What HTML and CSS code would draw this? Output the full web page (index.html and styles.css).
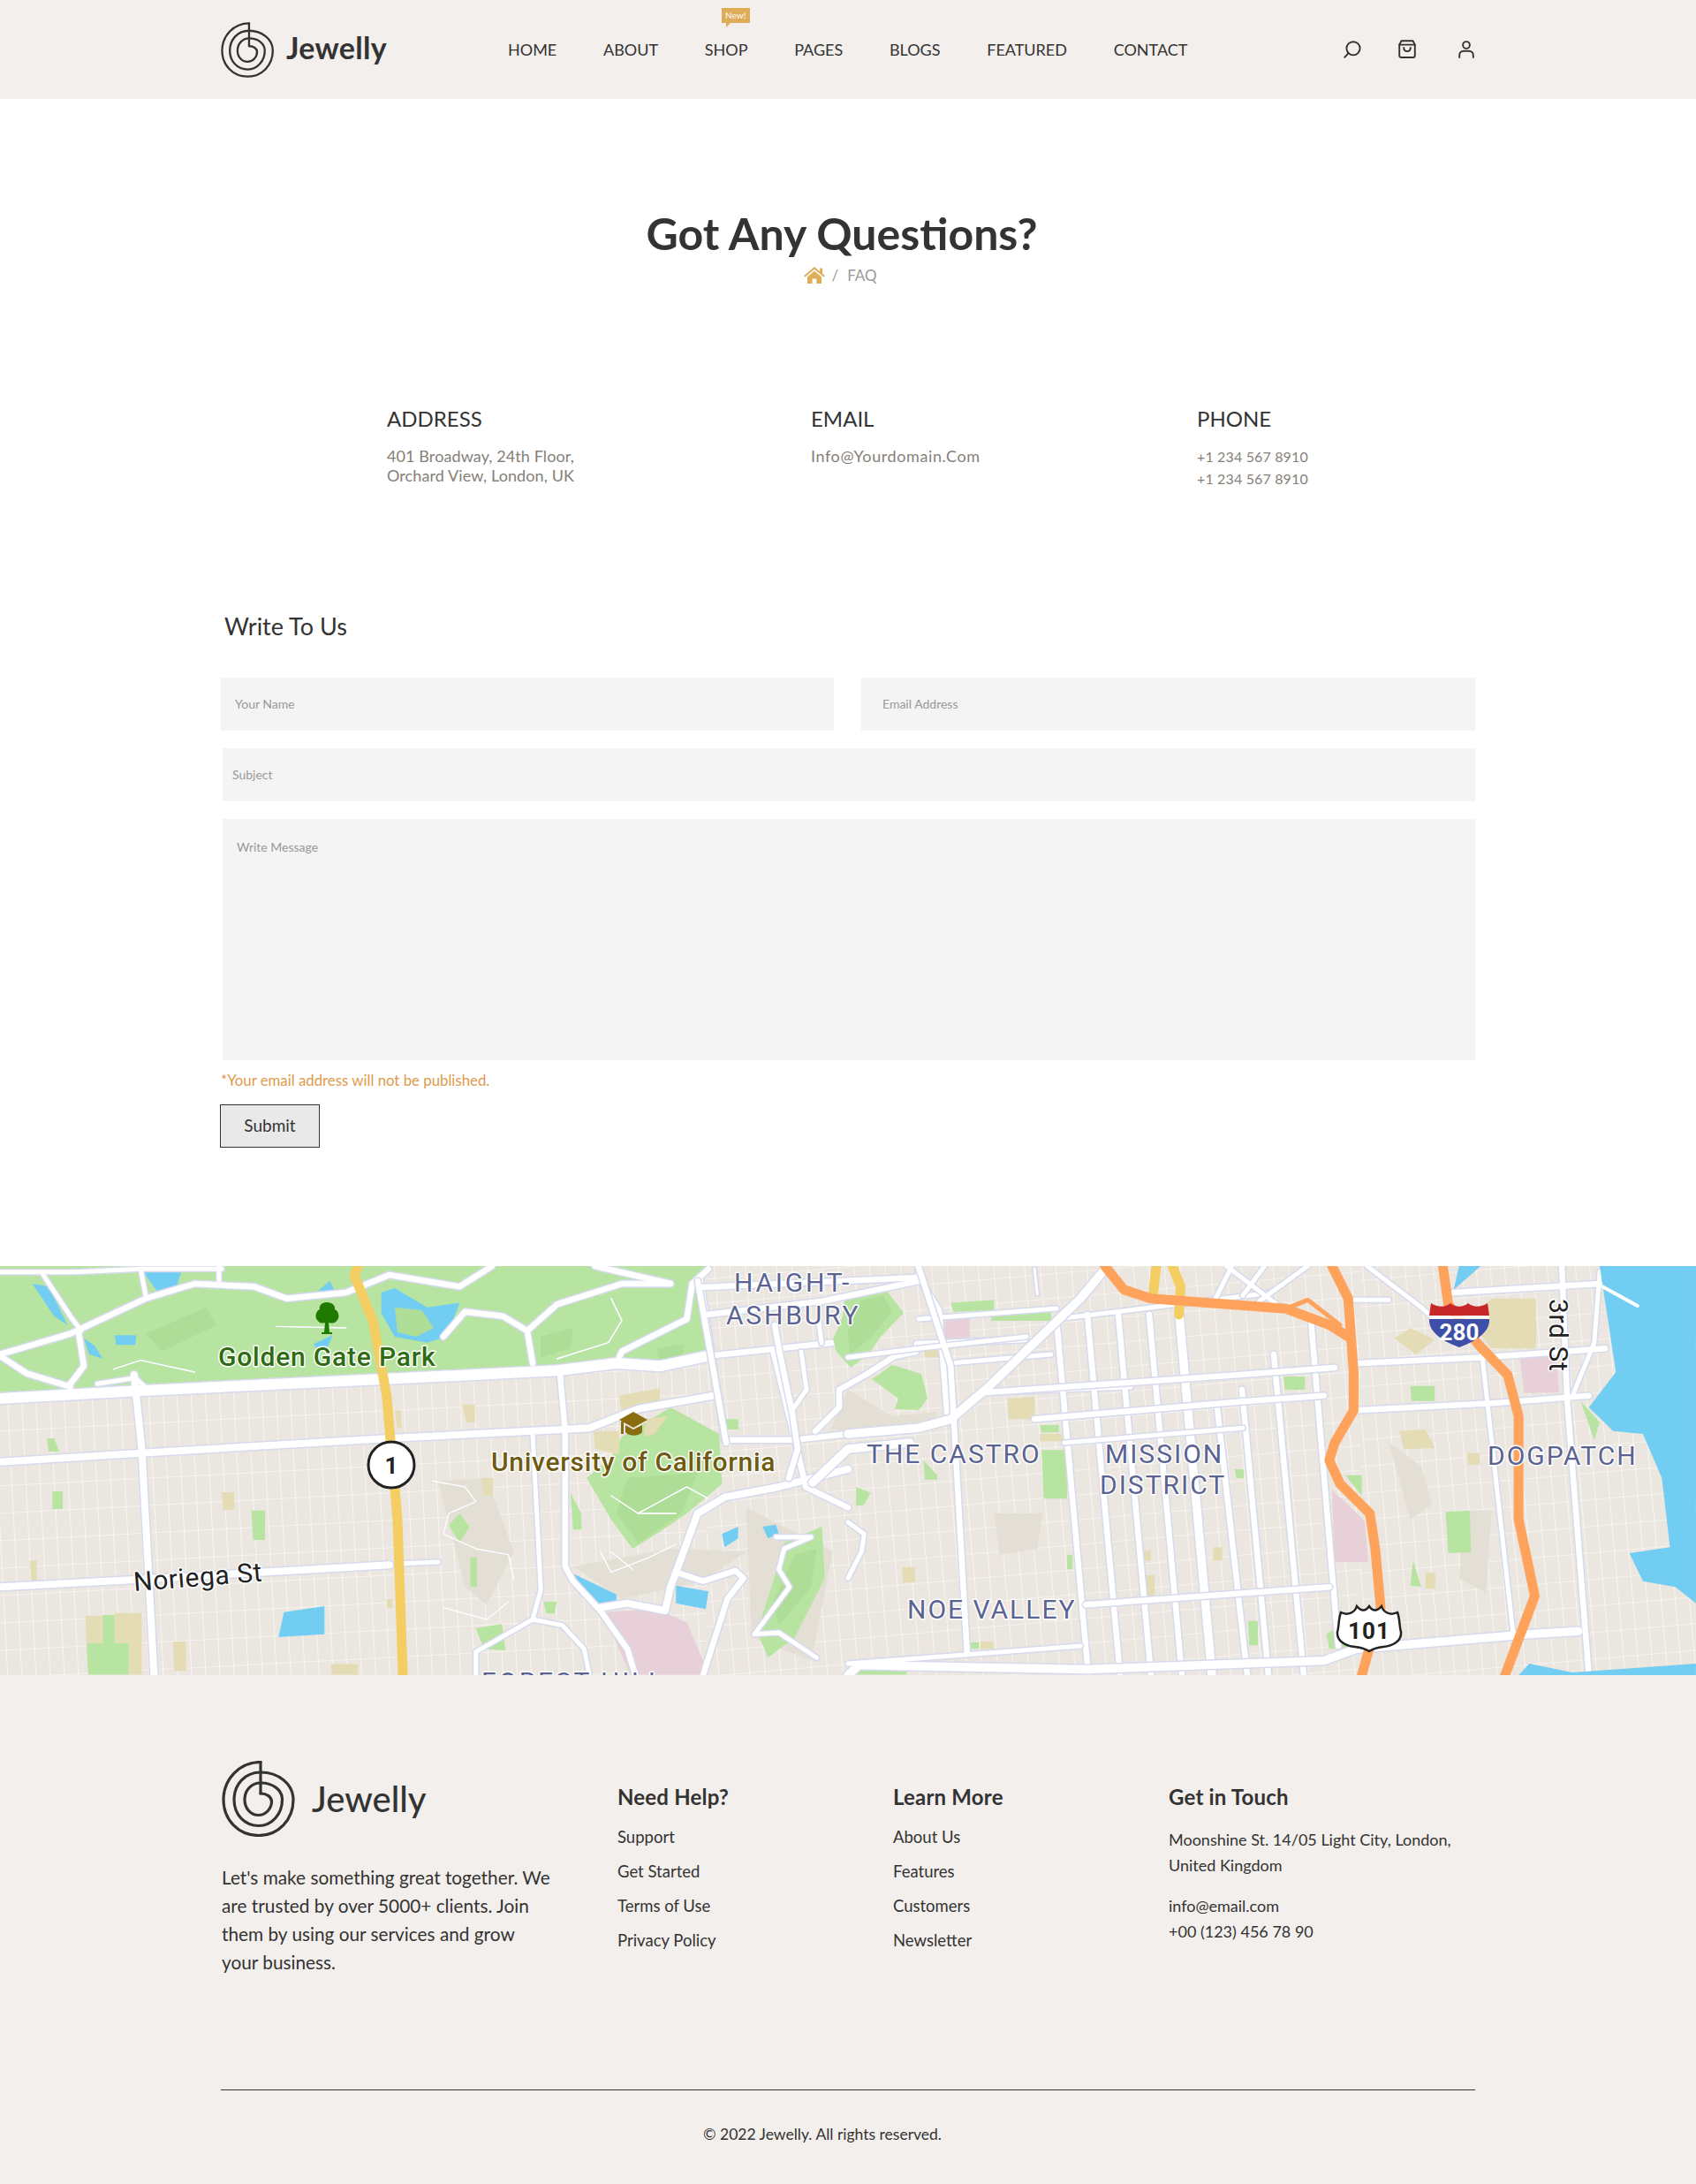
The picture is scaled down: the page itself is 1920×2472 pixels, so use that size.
FILE: index.html
```html
<!DOCTYPE html>
<html lang="en">
<head>
<meta charset="utf-8">
<title>Jewelly - Contact</title>
<link rel="stylesheet" href="styles.css">
</head>
<body>
<svg class="defs" width="0" height="0" aria-hidden="true">
  <defs>
    <g id="logo-mark">
      <path d="M44 1.5C20 1.5 2 21 2 44C2 67 19 84.5 42 84.5C64 84.5 81 67 81 44C81 26 64 13 44 13C26 13 14 27 14 44C14 61 26 73.5 42 73.5C57 73.5 68.5 60 68.5 44C68.5 33 58 25 44 25C34 25 26 33 26 44C26 54 33 61.5 41.5 61.5C50 61.5 56.5 54 56.5 46C56.5 41 51 37 44 37"/>
      <path d="M44 1.5V37"/>
    </g>
  </defs>
</svg>

<header class="site-header">
  <a class="brand" href="#">
    <svg class="brand-mark" viewBox="0 0 84 86"><use href="#logo-mark"/></svg>
    <span class="brand-name">Jewelly</span>
  </a>
  <nav class="main-nav">
    <a href="#">HOME</a>
    <a href="#">ABOUT</a>
    <a href="#" class="has-badge">SHOP<span class="badge">New!</span></a>
    <a href="#">PAGES</a>
    <a href="#">BLOGS</a>
    <a href="#">FEATURED</a>
    <a href="#">CONTACT</a>
  </nav>
  <div class="header-icons">
    <svg class="icon icon-search" viewBox="0 0 20 20"><circle cx="11" cy="8.8" r="7.6"/><path d="M5.6 14.2L1.2 18.8"/></svg>
    <svg class="icon icon-bag" viewBox="0 0 20 21"><path d="M3.5 1.2H16.5L18.8 5.6V18A2 2 0 0 1 16.8 20H3.2A2 2 0 0 1 1.2 18V5.6Z"/><path d="M1.2 5.6H18.8"/><path d="M6.2 9C6.2 14.4 13.8 14.4 13.8 9"/></svg>
    <svg class="icon icon-user" viewBox="0 0 18 20"><circle cx="9" cy="5" r="3.9"/><path d="M1.2 19V16.5C1.2 13.6 3.4 11.8 6 11.8H12C14.6 11.8 16.8 13.6 16.8 16.5V19"/></svg>
  </div>
</header>

<main>
  <section class="page-title">
    <h1>Got Any Questions?</h1>
    <div class="crumbs">
      <svg class="crumb-home" viewBox="0 0 24 19"><path d="M12 0L18.2 5.2V1.6H21V7.6L24 10.2L22.6 11.6L12 2.8L1.4 11.6L0 10.2Z"/><path d="M4 11.4L12 4.8L20 11.4V19H14.4V13.4H9.6V19H4Z"/></svg>
      <span class="crumb-sep">/</span>
      <span class="crumb-page">FAQ</span>
    </div>
  </section>

  <section class="contact-info">
    <div class="info-col">
      <h2>ADDRESS</h2>
      <p class="tight">401 Broadway, 24th Floor,<br>Orchard View, London, UK</p>
    </div>
    <div class="info-col">
      <h2>EMAIL</h2>
      <p class="spaced">Info@Yourdomain.Com</p>
    </div>
    <div class="info-col">
      <h2>PHONE</h2>
      <p class="numbers">+1 234 567 8910<br>+1 234 567 8910</p>
    </div>
  </section>

  <section class="write-us">
    <h2>Write To Us</h2>
    <form class="contact-form">
      <div class="row-two">
        <input class="field field-name" type="text" placeholder="Your Name">
        <input class="field field-email" type="text" placeholder="Email Address">
      </div>
      <input class="field field-subject" type="text" placeholder="Subject">
      <textarea class="field field-message" placeholder="Write Message"></textarea>
      <p class="form-note">*Your email address will not be published.</p>
      <button class="submit" type="button">Submit</button>
    </form>
  </section>

  <section class="map">
    <svg class="map-svg" viewBox="0 0 1920 463" preserveAspectRatio="none">
      <defs>
        <pattern id="grid-a" width="16" height="31" patternUnits="userSpaceOnUse" patternTransform="rotate(-3)">
          <path class="grid-line" d="M0 0V31M0 0H16"/>
        </pattern>
        <pattern id="grid-b" width="17.5" height="28" patternUnits="userSpaceOnUse" patternTransform="rotate(-5)">
          <path class="grid-line" d="M0 0V28M0 0H17.5"/>
        </pattern>
        <pattern id="grid-c" width="16" height="30" patternUnits="userSpaceOnUse" patternTransform="rotate(-5)">
          <path class="grid-line" d="M0 0V30M0 0H16"/>
        </pattern>
        <g id="roads-west">
          <path class="r11" d="M0 490L240 465L700 425L1030 395L1140 370L1220 380L1310 345"/>
          <path class="r5" d="M1310 345L1568 295"/>
          <path class="r6" d="M0 705L260 675L720 625L1040 595L1090 590L1180 525L1320 480"/>
          <path class="r6" d="M0 1130L250 1105L720 1055"/>
          <path class="r4" d="M740 1050L810 1045"/>
          <path class="r6" d="M248 410L262 660L285 1430"/>
          <path class="r5" d="M1035 395L1045 600L1045 1060L1060 1110L1110 1210L1160 1340L1175 1430"/>
          <path class="r4" d="M985 610L1000 1140L985 1240L880 1350L880 1430"/>
          <path class="r4" d="M985 1240L1040 1260L1080 1340L1090 1430"/>
          <path class="r5" d="M1295 90L1340 630L1470 630L1568 610"/>
          <path class="r5" d="M1430 330L1470 630L1490 790L1568 860"/>
          <path class="r6" d="M1568 730L1440 790L1340 825L1290 880L1240 1130L1230 1210L1160 1185L1110 1200"/>
          <path class="r5" d="M1250 1080L1300 1110L1360 1075L1375 1100L1345 1170L1300 1430"/>
          <path class="r4" d="M1435 960L1500 960L1450 1000L1440 1070L1460 1130L1395 1290L1440 1285L1510 1370"/>
          <path class="r5" d="M0 340L130 270L270 150L360 100L470 110L530 150L640 130L720 70L850 110L910 40"/>
          <path class="r5" d="M0 345L50 405L130 450"/>
          <path class="r5" d="M145 260L155 380L130 440"/>
          <path class="r4" d="M80 70L130 210L150 260"/>
          <path class="r4" d="M260 50L270 145"/>
          <path class="r5" d="M1145 350L1150 330L1270 220L1280 100L1310 50"/>
          <path class="r5" d="M985 370L975 260L1030 170L1150 100L1240 100"/>
          <path class="r5" d="M820 280L860 195L930 210L975 260"/>
          <path class="r5" d="M1100 40L1240 100"/>
          <path class="r4" d="M0 60L140 60L260 50L410 50"/>
          <path class="r4" d="M405 40L405 90"/>
          <path class="r4" d="M180 440L250 420L280 470"/>
          <path class="r2" d="M510 245L640 250"/>
          <path class="r2" d="M210 390L260 360L360 400"/>
          <path class="r2" d="M1130 150L1150 225L1125 300L1030 355"/>
          <path class="r2" d="M800 770L860 790L880 840L830 880L820 950L880 1000L940 1020L950 1100"/>
          <path class="r2" d="M1130 820L1180 880L1270 790L1310 830"/>
          <path class="r2" d="M1110 1010L1130 1080L1200 1030L1250 985"/>
          <path class="r2" d="M1130 1010L1170 1070"/>
          <path class="r2" d="M1180 880H1250"/>
          <path class="r2" d="M820 1200L900 1240L940 1180"/>
        </g>
        <g id="roads-mid">
          <path class="r5" d="M790 17L822 200"/>
          <path class="r5" d="M795 24L1040 13"/>
          <path class="r5" d="M800 55L930 40L1040 17"/>
          <path class="r5" d="M1040 0V13L1063 50L1073 177"/>
          <path class="r7" d="M920 245L960 207L1030 200"/>
          <path class="r5" d="M877 67L883 100L897 167L903 207L893 240"/>
          <path class="r4" d="M907 97L913 140L897 163"/>
          <path class="r4" d="M927 63L930 87"/>
          <path class="r5" d="M923 187L950 160L950 140L980 123L1013 102L1037 97L1038 88L1070 87L1160 83"/>
          <path class="r4" d="M1117 143L1280 137"/>
          <path class="r4" d="M1172 173L1280 163"/>
          <path class="r4" d="M1040 60L1196 48"/>
          <path class="r4" d="M1075 110L1190 100"/>
          <path class="r4" d="M1196 60L1440 30"/>
          <path class="r5" d="M1196 60L1232 463"/>
          <path class="r5" d="M1231 55L1268 463"/>
          <path class="r5" d="M1266 55L1303 463"/>
          <path class="r5" d="M1301 55L1338 463"/>
          <path class="r7" d="M1335 55L1372 463"/>
          <path class="r5" d="M1378 160L1412 463"/>
          <path class="r5" d="M1406 140L1436 463"/>
          <path class="r5" d="M1442 100L1476 463"/>
          <path class="r5" d="M1484 60L1515 430"/>
        </g>
        <g id="roads-east">
          <path class="r7" d="M0 610L130 590L190 560L260 450L430 150L480 40"/>
          <path class="r5" d="M250 470L720 410L900 385"/>
          <path class="r5" d="M945 370L1180 350L1400 320"/>
          <path class="r5" d="M345 560L730 500L880 480"/>
          <path class="r5" d="M940 530L1200 505L1370 480"/>
          <path class="r4" d="M400 640L730 590"/>
          <path class="r4" d="M0 1390L430 1330"/>
          <path class="r5" d="M440 1190L890 1130"/>
          <path class="r7" d="M0 1430L20 1395L440 1410L880 1380L940 1340L1260 1290L1350 1280"/>
          <path class="r5" d="M1320 40L1330 500L1370 1430"/>
          <path class="r4" d="M1390 60L1380 300L1340 480"/>
          <path class="r4" d="M1170 300L1230 1290"/>
          <path class="r5" d="M130 40L190 380L220 1350"/>
          <path class="r4" d="M0 350L130 320L330 280"/>
          <path class="r4" d="M680 150L710 40"/>
          <path class="r4" d="M700 40L800 180"/>
          <path class="r4" d="M770 40L730 140"/>
          <path class="r4" d="M850 40L760 160"/>
          <path class="r4" d="M960 40L1060 180L1130 300"/>
          <path class="r5" d="M1120 130L1390 100"/>
          <path class="r4" d="M0 910L30 950L25 1010L0 1100"/>
          <path class="r3" d="M345 50L350 135"/>
          <path class="r4" d="M930 155L1000 155"/>
        </g>
      </defs>

      <rect class="land" width="1920" height="463"/>
      <rect x="0" y="95" width="800" height="368" fill="url(#grid-a)"/>
      <rect x="800" y="0" width="740" height="463" fill="url(#grid-b)"/>
      <rect x="1540" y="0" width="380" height="463" fill="url(#grid-c)"/>

      <g transform="scale(0.6122 0.3333) translate(0 -40)">
        <path class="terrain" d="M810 770L900 760L950 1010L900 1190L860 1130Z"/>
        <path class="terrain" d="M1060 1060L1240 1000L1380 1010L1300 1110L1150 1170Z"/>
        <path class="terrain" d="M1380 860L1540 1010L1500 1380L1390 1300Z"/>
        <path class="park" d="M0 40H1310L1290 100L1315 345L1220 380L1140 370L1030 395L700 425L240 465L0 490Z"/>
        <path class="park-deep" d="M270 270L380 180L400 240L300 330Z"/>
        <path class="park-deep" d="M1000 280L1060 250L1055 320L1000 350Z"/>
        <path class="park-deep" d="M1215 320L1265 305L1260 360L1220 365Z"/>
        <path class="park" d="M1240 520L1330 610L1335 780L1270 880L1230 930L1170 1000L1130 900L1085 760L1130 690L1150 620Z"/>
        <path class="park-deep" d="M1160 760L1290 740L1260 880L1180 980L1140 880Z"/>
        <path class="park" d="M1450 980L1520 925L1525 1100L1470 1300L1420 1370L1400 1280L1430 1110Z"/>
        <path class="park-deep" d="M1470 1020L1510 1000L1500 1130L1440 1260L1430 1180Z"/>
        <path class="park" d="M830 920L850 880L868 925L850 980ZM880 1270L928 1255L935 1345L895 1340ZM465 870H490V970H468ZM87 625H100L110 670H90ZM1340 560H1365V595H1342ZM1005 1180H1030L1025 1220H1010ZM870 1030H882V1130H870ZM97 805H116V865H97ZM160 1320H238V1428H163ZM190 1225H212V1320H190ZM1055 810L1075 880V935H1060Z"/>
        <path class="tan" d="M855 510H878V570H862ZM890 760H912V820H895ZM410 808H433V868H413ZM55 1040H68V1110H58ZM320 1315H344V1415H322ZM158 1228H190V1320H160ZM212 1218H262V1428H238V1320H212ZM612 1392H662V1428H614ZM715 1172H726V1202H715ZM1145 480L1220 455L1220 530L1150 540ZM1098 600H1145V680L1100 660ZM1195 560L1235 550L1210 610L1190 620ZM730 530H742V590H735Z"/>
        <path class="pink" d="M1115 1215L1215 1205L1270 1250L1300 1380V1428H1165Z"/>
        <path class="water" d="M265 60H335L325 120L290 125ZM60 100L90 110L125 240L100 210ZM155 285L175 310L190 355L165 340ZM212 275H252L250 308H215ZM585 130L610 90L620 130ZM580 305L615 275L605 320H585ZM705 130L730 115L790 180L850 165L825 280L790 300L730 280L705 200ZM525 1215L600 1195V1290L515 1300ZM1335 950L1365 925V965L1340 995ZM1410 925L1435 918L1440 950L1420 965ZM1250 1125L1310 1145L1305 1205L1250 1185ZM1055 1080L1140 1155V1175L1100 1190Z"/>
        <path class="park-soft" d="M730 180L780 190L802 250L770 280L735 265Z"/>
        <use class="casing" href="#roads-west"/>
        <use class="road" href="#roads-west"/>
        <path class="hwy-y" d="M662 40L655 70L690 230L715 480L722 630L735 900L745 1430"/>
      </g>

      <path class="park" d="M957 33L1003 27L1023 53L997 80L983 100L963 115L947 97L943 83L953 60Z"/>
      <path class="park-deep" d="M975 38L1000 34L1010 52L985 82L962 100L960 75Z"/>
      <path class="park" d="M987 128L1010 112L1043 122L1050 150L1040 163L1013 162L1017 150Z"/>
      <path class="terrain" d="M960 140L1010 170L1060 165V178L1010 190L940 185Z"/>
      <path class="park" d="M1190 62V52L1125 52V45L1125 38L1122 62Z"/>

      <g transform="translate(960 0) scale(0.6122 0.3333) translate(0 -40)">
        <path class="terrain" d="M270 880H360L350 1000L280 1020Z"/>
        <path class="terrain" d="M1000 640L1060 720L1080 850L1040 900Z"/>
        <path class="terrain" d="M1140 870L1190 870L1180 1150L1130 1100Z"/>
        <path class="park" d="M190 165L270 155V190L195 195ZM805 415H845V460H808ZM1040 447H1085V498H1042ZM1250 445H1280L1275 470H1250ZM355 580H390V605H358ZM358 665H405V830H362ZM140 700L165 750V765H142ZM15 790L42 810L30 850L15 855ZM1105 875L1150 870L1152 1012L1110 1015ZM1045 1040L1060 1130L1040 1125ZM740 1245H758V1328H742ZM225 1318H242V1340H225ZM405 1020H415V1070H405ZM715 730H732V760H718ZM920 750H950L950 820ZM1355 500L1390 570L1380 630ZM885 1290L915 1250L925 1340H890ZM1232 230H1272V285H1234ZM20 1400L108 1390V1428H10Z"/>
        <path class="tan" d="M295 490L345 485V560H297ZM140 325H168V350H142ZM1190 150H1272V320H1190L1150 230ZM1010 285L1040 250L1085 290L1050 340ZM1020 600L1068 595L1085 658L1028 662ZM1145 675H1168V715H1147ZM545 1005H560V1040H545ZM675 995H692V1040H675ZM550 1090H567V1160H552ZM100 1062H124V1115H102ZM245 1315H268V1340H245ZM1068 1082H1086V1135H1068Z"/>
        <path class="tan" d="M355 610H398V635H355Z"/>
        <path class="pink" d="M178 210L225 205V290H180ZM1243 355L1310 345L1315 470H1250ZM895 800L935 870L955 905L962 1045H900Z"/>
      </g>

      <use class="casing" href="#roads-mid"/>
      <use class="road" href="#roads-mid"/>

      <g transform="translate(960 0) scale(0.6122 0.3333) translate(0 -40)">
        <use class="casing" href="#roads-east"/>
        <use class="road" href="#roads-east"/>
        <path class="water" d="M1390 40H1568V1185L1530 1130L1470 1110L1445 1015L1520 995L1505 760L1470 610L1415 600L1370 520L1420 400ZM1240 1430L1260 1390L1340 1420L1568 1390V1430ZM1130 40H1170L1120 120Z"/>
        <path class="pier" d="M1395 110L1460 175"/>
        <path class="hwy-y" d="M570 40L565 125"/>
        <path class="hwy-y" d="M600 40L615 110L612 205"/>
        <path class="hwy" d="M475 40L510 120L560 150L810 185L890 240L925 280"/>
        <path class="hwy-thin" d="M810 185L850 155L910 240"/>
        <path class="hwy" d="M895 40L925 150L935 400L935 530L900 640L890 700L910 780L965 880L975 1000L985 1200L950 1430"/>
        <path class="hwy" d="M1100 40L1110 170L1165 305L1220 410L1240 550L1240 900L1270 1160L1215 1430"/>
      </g>

      <path class="tree" d="M370 41C364 41 361 45 362 49C357 51 356 59 360 62C362 65 366 65 368 64L367 75H364V77H376V75H373L372 64C375 65 379 65 381 62C385 59 384 51 379 49C380 45 376 41 370 41Z"/>
      <path class="cap" d="M717 165L733 174L717 183L701 174Z"/>
      <path class="cap" d="M708 180L717 185L727 180V188C723 193 712 193 708 188Z"/>
      <path class="cap" d="M703 176H706V190H703Z"/>

      <text class="lbl lbl-park" x="247" y="113">Golden Gate Park</text>
      <text class="lbl lbl-uni" x="556" y="232">University of California</text>
      <text class="lbl lbl-street" transform="translate(152 368) rotate(-4.5)">Noriega St</text>
      <text class="lbl lbl-street" transform="translate(1754 37) rotate(90)">3rd St</text>
      <text class="lbl lbl-hood lbl-wide" x="831" y="29">HAIGHT-</text>
      <text class="lbl lbl-hood lbl-wide" x="822" y="66">ASHBURY</text>
      <text class="lbl lbl-hood" x="981" y="223">THE CASTRO</text>
      <text class="lbl lbl-hood" x="1251" y="223">MISSION</text>
      <text class="lbl lbl-hood" x="1245" y="258">DISTRICT</text>
      <text class="lbl lbl-hood" x="1027" y="399">NOE VALLEY</text>
      <text class="lbl lbl-hood" x="1684" y="225">DOGPATCH</text>
      <text class="lbl lbl-hood lbl-wide" x="545" y="481">FOREST HILL</text>

      <circle class="shield-1" cx="443" cy="225" r="26"/>
      <text class="shield-num" x="443" y="235">1</text>

      <path class="i280-blue" d="M1618 60H1686C1687 76 1668 86 1652 92C1636 86 1617 76 1618 60Z"/>
      <path class="i280-red" d="M1620 42C1628 47 1636 47 1642 42C1648 47 1656 47 1662 42C1668 47 1676 47 1684 42L1686 56H1618Z"/>
      <path class="i280-line" d="M1618 58H1686"/>
      <text class="shield-280" x="1652" y="84">280</text>

      <path class="us101" d="M1518 392C1526 396 1534 392 1536 385C1541 391 1546 391 1550 385C1554 391 1559 391 1564 385C1566 392 1574 396 1582 392C1585 400 1584 408 1586 414C1587 425 1576 430 1566 431C1558 432 1553 434 1550 436C1547 434 1542 432 1534 431C1524 430 1513 425 1514 414C1516 408 1515 400 1518 392Z"/>
      <text class="shield-101" x="1550" y="422">101</text>
    </svg>
  </section>
</main>

<footer class="site-footer">
  <div class="footer-top">
    <div class="footer-about">
      <a class="foot-brand" href="#">
        <svg class="foot-mark" viewBox="0 0 84 86"><use href="#logo-mark"/></svg>
        <span class="foot-name">Jewelly</span>
      </a>
      <p>Let's make something great together. We are trusted by over 5000+ clients. Join them by using our services and grow your business.</p>
    </div>
    <div class="footer-col">
      <h3>Need Help?</h3>
      <ul>
        <li><a href="#">Support</a></li>
        <li><a href="#">Get Started</a></li>
        <li><a href="#">Terms of Use</a></li>
        <li><a href="#">Privacy Policy</a></li>
      </ul>
    </div>
    <div class="footer-col">
      <h3>Learn More</h3>
      <ul>
        <li><a href="#">About Us</a></li>
        <li><a href="#">Features</a></li>
        <li><a href="#">Customers</a></li>
        <li><a href="#">Newsletter</a></li>
      </ul>
    </div>
    <div class="footer-col footer-touch">
      <h3>Get in Touch</h3>
      <p>Moonshine St. 14/05 Light City, London,<br>United Kingdom</p>
      <p>info@email.com<br>+00 (123) 456 78 90</p>
    </div>
  </div>
  <div class="footer-bottom">© 2022 Jewelly. All rights reserved.</div>
</footer>
</body>
</html>
```

FILE: styles.css
```css
* { box-sizing: border-box; }
html, body { margin: 0; padding: 0; }
body {
  font-family: Lato, "Liberation Sans", sans-serif;
  color: #333;
  background: #fff;
}
a { color: inherit; text-decoration: none; }
h1, h2, h3, p, ul { margin: 0; padding: 0; }
ul { list-style: none; }
.defs { position: absolute; }

#logo-mark { fill: none; stroke: #333; stroke-width: 3.2; stroke-linecap: round; stroke-linejoin: round; }

.site-header {
  height: 112px;
  background: #f3efec;
  padding: 0 250px;
  display: flex;
  align-items: center;
}
.brand { display: flex; align-items: center; width: 325px; }
.brand-mark { width: 61px; height: 63px; margin-top: 1px; }
.brand-name { font-size: 34px; font-weight: 700; margin-left: 13px; margin-top: -6px; letter-spacing: .3px; }

.main-nav { display: flex; gap: 52.7px; font-size: 18px; line-height: 20px; }
.has-badge { position: relative; }
.badge {
  position: absolute;
  left: 19px;
  top: -37px;
  width: 32px;
  height: 17px;
  background: #dfac59;
  color: #fff;
  font-size: 10px;
  line-height: 16px;
  text-align: center;
}
.badge::after {
  content: "";
  position: absolute;
  left: 5px;
  top: 17px;
  border-top: 5px solid #dfac59;
  border-right: 5px solid transparent;
}

.header-icons { margin-left: auto; display: flex; align-items: center; gap: 42px; margin-right: 1px; margin-top: -1px; }
.icon { fill: none; stroke: #333; stroke-width: 1.9; stroke-linecap: round; stroke-linejoin: round; display: block; }
.icon-search { width: 20px; height: 20px; }
.icon-bag { width: 20px; height: 21px; }
.icon-user { width: 18px; height: 20px; margin-left: 6px; }

.page-title { text-align: center; padding-top: 123px; padding-right: 14px; }
.page-title h1 { font-size: 50px; line-height: 58px; font-weight: 700; }
.crumbs { display: flex; justify-content: center; align-items: center; height: 24px; margin: 6px 0 0 -3px; color: #9b9b9b; font-size: 17px; gap: 7px; }
.crumb-home { width: 24px; height: 19px; fill: #dfac59; }
.crumb-sep { margin-right: 3px; }

.contact-info {
  display: grid;
  grid-template-columns: 480px 437px auto;
  padding: 137px 0 0 438px;
}
.info-col h2 { font-size: 24px; line-height: 28px; font-weight: 400; color: #333; margin-bottom: 16px; }
.info-col p { font-size: 18px; line-height: 25px; color: #857f78; }
.info-col p.tight { line-height: 22px; letter-spacing: .1px; padding-top: 1px; }
.info-col p.spaced { letter-spacing: .6px; }
.info-col p.numbers { font-size: 16px; letter-spacing: .15px; }

.write-us { padding: 138px 250px 0; }
.write-us h2 { font-size: 27px; line-height: 34px; font-weight: 400; padding-left: 4px; margin-bottom: 41px; }
.contact-form { display: flex; flex-direction: column; }
.row-two { display: grid; grid-template-columns: 694px 695px; gap: 31px; margin-bottom: 20px; }
.field {
  display: block;
  border: 0;
  outline: 0;
  background: #f4f4f4;
  height: 60px;
  font-family: inherit;
  font-size: 14px;
  color: #333;
  padding-bottom: 2px;
}
.field::placeholder { color: #999; opacity: 1; }
.field-name { padding-left: 16px; }
.field-email { padding-left: 24px; }
.field-subject { margin-left: 2px; width: 1418px; padding-left: 11px; margin-bottom: 20px; }
.field-message { margin-left: 2px; width: 1418px; height: 273px; padding: 23px 16px; resize: none; }
.form-note { color: #e09a4b; font-size: 16.8px; line-height: 20px; margin-top: 13px; }
.submit {
  width: 113px;
  height: 49px;
  margin: 17px 0 0 -1px;
  background: #e9e9e9;
  border: 1px solid #333;
  border-radius: 0;
  font-family: inherit;
  font-size: 19px;
  color: #333;
  padding: 0 0 3px;
}

.map { margin-top: 134px; height: 463px; overflow: hidden; }
.map-svg { display: block; width: 1920px; height: 463px; }
.grid-line { fill: none; stroke: #fff; stroke-width: 1.2; }
.land { fill: #ebe6df; }
.terrain { fill: #e4dfd4; }
.park { fill: #b7e4a0; }
.park-deep, .park-soft { fill: #aedd98; }
.tan { fill: #e4dcb4; }
.pink { fill: #e7d0d8; }
.water { fill: #72cdf2; }
.casing, .road, .hwy, .hwy-y, .hwy-thin, .pier { fill: none; stroke-linecap: round; stroke-linejoin: round; }
.map-svg path { vector-effect: non-scaling-stroke; }
.r2 { stroke-width: 1.4px; }
.r3 { stroke-width: calc(3px + var(--extra, 0px)); }
.r4 { stroke-width: calc(5px + var(--extra, 0px)); }
.r5 { stroke-width: calc(6.5px + var(--extra, 0px)); }
.r6 { stroke-width: calc(8px + var(--extra, 0px)); }
.r7 { stroke-width: calc(9.5px + var(--extra, 0px)); }
.r11 { stroke-width: calc(12px + var(--extra, 0px)); }
.road { stroke: #fff; }
.casing { stroke: #d6daec; --extra: 3px; }
.pier { stroke: #fff; stroke-width: 4; }
.hwy { stroke: #ffa35c; stroke-width: 11; }
.hwy-thin { stroke: #ffa35c; stroke-width: 5; }
.hwy-y { stroke: #f4ce62; stroke-width: 11; }
.tree { fill: #1f7a00; }
.cap { fill: #8a6d10; }
.lbl {
  font-family: Roboto, "Liberation Sans", sans-serif;
  font-size: 30px;
  paint-order: stroke;
  stroke: #fff;
  stroke-width: 3px;
  stroke-linejoin: round;
}
.lbl-park { fill: #2e6b12; font-weight: 500; letter-spacing: .8px; }
.lbl-uni { fill: #6e5a10; font-weight: 500; letter-spacing: .7px; }
.lbl-street { fill: #222; letter-spacing: .6px; }
.lbl-hood { fill: #5a6391; letter-spacing: 2px; }
.lbl-wide { letter-spacing: 2.8px; }
.shield-1 { fill: #fff; stroke: #222; stroke-width: 3; }
.shield-num { font-family: Roboto, sans-serif; font-size: 26px; font-weight: 700; fill: #222; text-anchor: middle; }
.i280-blue { fill: #3d4fa8; }
.i280-red { fill: #c8272a; }
.i280-line { stroke: #fff; stroke-width: 3; fill: none; }
.shield-280 { font-family: Roboto, sans-serif; font-size: 26px; font-weight: 700; fill: #fff; text-anchor: middle; }
.us101 { fill: #fff; stroke: #222; stroke-width: 2.5; }
.shield-101 { font-family: Roboto, sans-serif; font-size: 26px; font-weight: 700; fill: #222; text-anchor: middle; letter-spacing: 1px; }

.site-footer { background: #f3efec; height: 576px; padding: 97px 250px 0; }
.footer-top { display: grid; grid-template-columns: 449px 312px 312px 347px; height: 373px; border-bottom: 1px solid #333; }
.foot-brand { display: flex; align-items: center; padding-left: 1px; }
.foot-mark { width: 84px; height: 86px; }
.foot-name { font-size: 40px; font-weight: 500; margin-left: 18px; margin-top: -1px; }
.footer-about p { font-size: 20.8px; line-height: 32px; width: 376px; margin-top: 30px; padding-left: 1px; color: #333; }
.footer-col h3 { font-size: 24px; line-height: 30px; font-weight: 700; margin-top: 26px; letter-spacing: .2px; }
.footer-col ul { margin-top: 11px; }
.footer-col li { font-size: 18.5px; line-height: 39px; }
.footer-touch p { font-size: 18px; line-height: 29px; margin-top: 19px; }
.footer-touch p + p { margin-top: 17px; }
.footer-bottom { text-align: center; font-size: 17.5px; line-height: 24px; padding-top: 38px; padding-right: 58px; }
```
